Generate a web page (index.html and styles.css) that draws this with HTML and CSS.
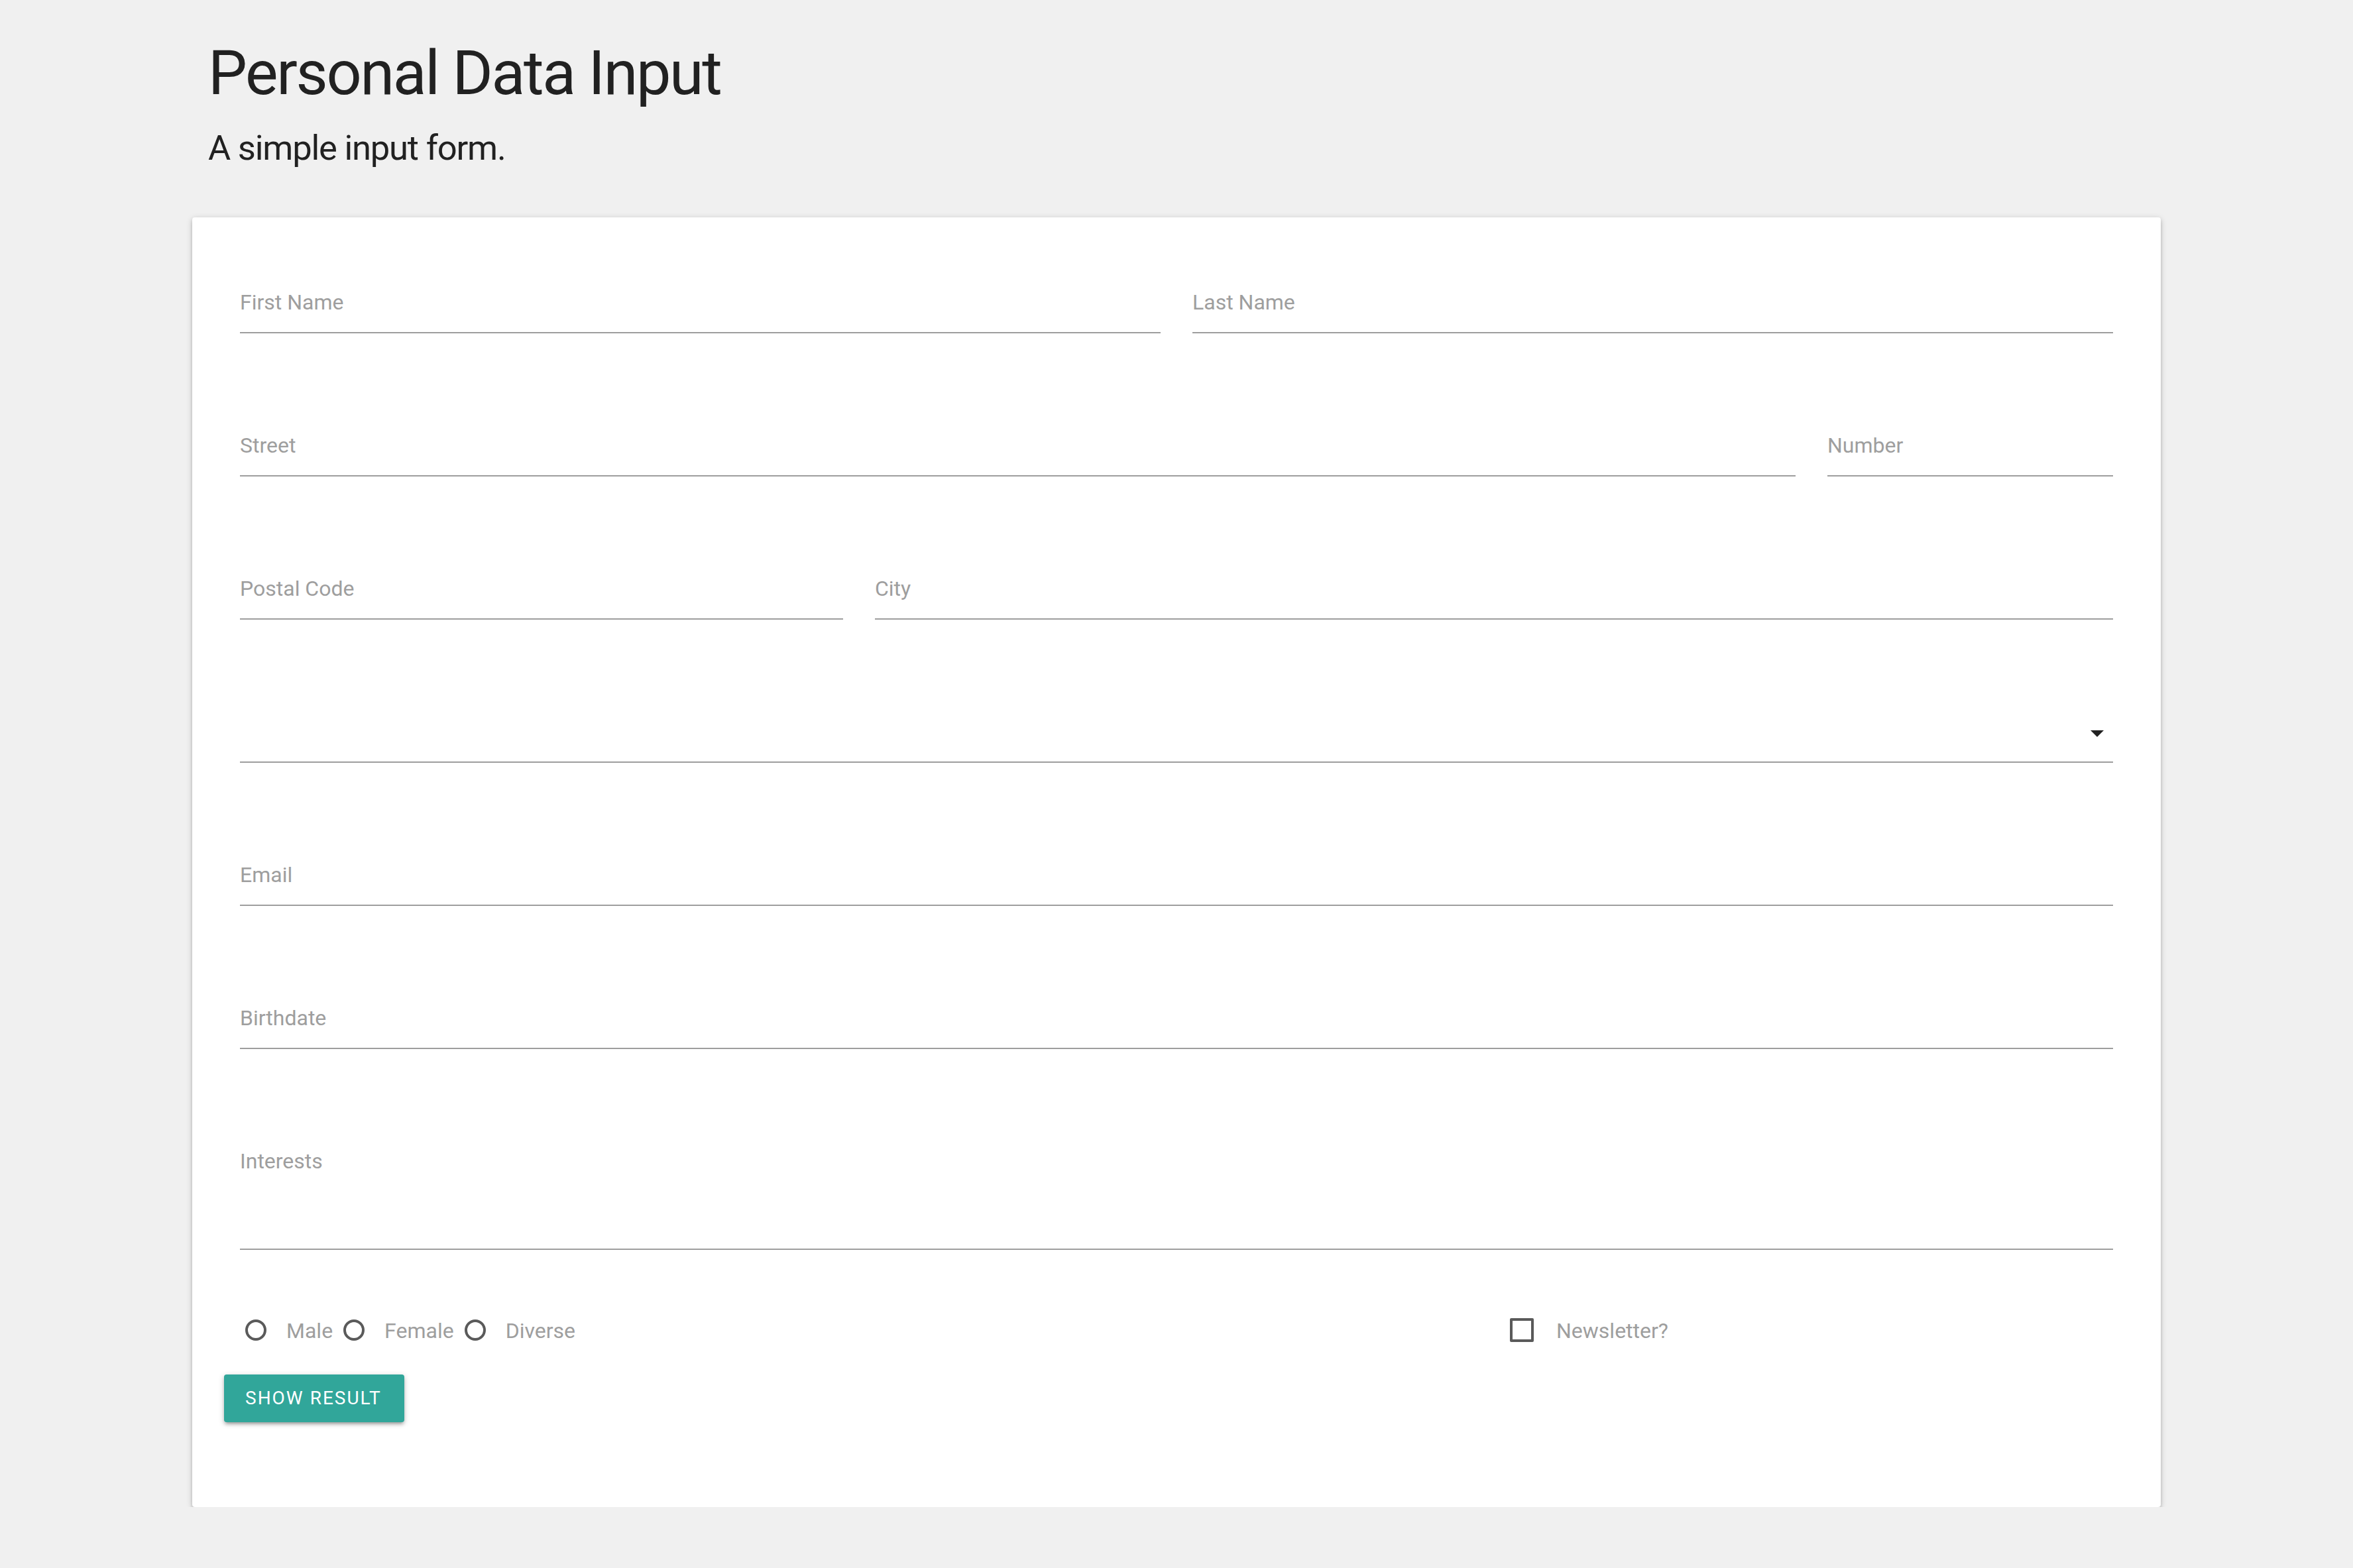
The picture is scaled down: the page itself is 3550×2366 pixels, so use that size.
FILE: index.html
```html
<!DOCTYPE html>
<html lang="en">
<head>
<meta charset="utf-8">
<title>Personal Data Input</title>
<link rel="stylesheet" href="styles.css">
</head>
<body>
<div class="container">
  <header class="header">
    <h1 class="title">Personal Data Input</h1>
    <p class="subtitle">A simple input form.</p>
  </header>

  <form class="card">
    <div class="fields">
      <div class="grid">
        <div class="field span-6">
          <label class="field-label" for="first">First Name</label>
          <input class="field-input" id="first" type="text">
        </div>
        <div class="field span-6">
          <label class="field-label" for="last">Last Name</label>
          <input class="field-input" id="last" type="text">
        </div>

        <div class="field span-10">
          <label class="field-label" for="street">Street</label>
          <input class="field-input" id="street" type="text">
        </div>
        <div class="field span-2">
          <label class="field-label" for="number">Number</label>
          <input class="field-input" id="number" type="text">
        </div>

        <div class="field span-4">
          <label class="field-label" for="postal">Postal Code</label>
          <input class="field-input" id="postal" type="text">
        </div>
        <div class="field span-8">
          <label class="field-label" for="city">City</label>
          <input class="field-input" id="city" type="text">
        </div>

        <div class="field span-12 select-wrapper">
          <input class="field-input select-input" type="text" readonly>
          <svg class="caret" width="48" height="48" viewBox="0 0 24 24" aria-hidden="true"><path d="M7 10l5 5 5-5z"/></svg>
        </div>

        <div class="field span-12">
          <label class="field-label" for="email">Email</label>
          <input class="field-input" id="email" type="email">
        </div>

        <div class="field span-12">
          <label class="field-label" for="birth">Birthdate</label>
          <input class="field-input" id="birth" type="text">
        </div>

        <div class="field span-12">
          <label class="field-label" for="interests">Interests</label>
          <textarea class="field-input field-textarea" id="interests"></textarea>
        </div>
      </div>

      <div class="grid options">
        <div class="radios span-8">
          <label class="choice"><span class="radio-dot"></span><span class="choice-text">Male</span></label>
          <label class="choice"><span class="radio-dot"></span><span class="choice-text">Female</span></label>
          <label class="choice"><span class="radio-dot"></span><span class="choice-text">Diverse</span></label>
        </div>
        <div class="checks span-4">
          <label class="choice"><span class="check-box"></span><span class="choice-text">Newsletter?</span></label>
        </div>
      </div>
    </div>

    <button class="btn" type="button">Show Result</button>
  </form>
</div>
</body>
</html>
```

FILE: styles.css
```css
* {
  box-sizing: border-box;
}

html, body {
  margin: 0;
  padding: 0;
}

body {
  background: #f0f0f0;
  font-family: Roboto, "Liberation Sans", Arial, sans-serif;
  color: rgba(0, 0, 0, 0.87);
}

.container {
  width: 2970px;
  margin: 0 auto;
  padding-top: 59px;
}

.header {
  padding-left: 24px;
}

.title {
  margin: 0;
  font-size: 93.4px;
  line-height: 102.74px;
  font-weight: 400;
  letter-spacing: -2.3px;
  color: #212121;
}

.subtitle {
  margin: 33.5px 0 0 0;
  font-size: 52.5px;
  line-height: 57.75px;
  font-weight: 400;
  letter-spacing: -1.2px;
  color: #212121;
}

.card {
  margin-top: 75px;
  background: #ffffff;
  border-radius: 4px;
  padding: 108px 48px 128px 48px;
  box-shadow: 0 4px 4px 0 rgba(0, 0, 0, 0.14),
              0 6px 2px -4px rgba(0, 0, 0, 0.12),
              0 2px 10px 0 rgba(0, 0, 0, 0.2);
}

.fields {
  padding: 0 24px;
}

.grid {
  display: grid;
  grid-template-columns: repeat(12, 1fr);
  column-gap: 48px;
  row-gap: 149px;
}

.span-2 { grid-column: span 2; }
.span-4 { grid-column: span 4; }
.span-6 { grid-column: span 6; }
.span-8 { grid-column: span 8; }
.span-10 { grid-column: span 10; }
.span-12 { grid-column: span 12; }

.field {
  display: flex;
  flex-direction: column;
}

.field-label {
  display: block;
  height: 40px;
  font-size: 32px;
  line-height: 40px;
  color: #9e9e9e;
}

.field-input {
  display: block;
  width: 100%;
  height: 27px;
  margin: 0;
  padding: 0;
  border: 0;
  border-bottom: 2px solid #9e9e9e;
  border-radius: 0;
  background: transparent;
  outline: none;
  font-family: inherit;
  font-size: 32px;
  color: rgba(0, 0, 0, 0.87);
}

.field-textarea {
  height: 114px;
  resize: none;
  overflow: hidden;
}

.select-wrapper {
  position: relative;
}

.select-input {
  height: 67px;
  cursor: pointer;
}

.caret {
  position: absolute;
  right: 0;
  top: -2px;
  fill: rgba(0, 0, 0, 0.87);
}

.options {
  margin-top: 97px;
}

.radios,
.checks {
  display: flex;
  gap: 8px;
}

.choice {
  display: flex;
  align-items: flex-start;
  height: 50px;
  font-size: 32px;
  line-height: 50px;
  color: #9e9e9e;
  cursor: pointer;
}

.radio-dot {
  flex: none;
  width: 32px;
  height: 32px;
  margin: 8px;
  border: 4px solid #5a5a5a;
  border-radius: 50%;
}

.check-box {
  flex: none;
  width: 36px;
  height: 36px;
  margin: 6px 0 0 0;
  border: 4px solid #5a5a5a;
  border-radius: 2px;
}

.radio-dot + .choice-text {
  margin-left: 22px;
}

.check-box + .choice-text {
  margin-left: 34px;
}

.btn {
  display: block;
  margin-top: 41px;
  height: 72px;
  padding: 0 34px 0 32px;
  border: 0;
  border-radius: 4px;
  background: #31a69a;
  color: #ffffff;
  font-family: Roboto, "Liberation Sans", Arial, sans-serif;
  font-size: 28px;
  font-weight: 400;
  letter-spacing: 2px;
  text-transform: uppercase;
  line-height: 72px;
  cursor: pointer;
  box-shadow: 0 4px 4px 0 rgba(0, 0, 0, 0.14),
              0 6px 2px -4px rgba(0, 0, 0, 0.12),
              0 2px 10px 0 rgba(0, 0, 0, 0.2);
}
```
